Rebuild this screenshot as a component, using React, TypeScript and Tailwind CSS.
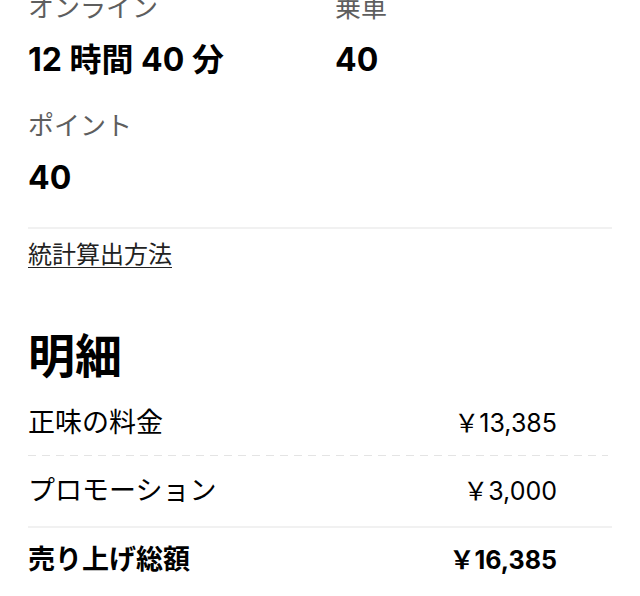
import React from 'react';

const font = { fontFamily: 'Inter, "Noto Sans CJK JP", sans-serif' };

interface Stat {
  label: string;
  value: string;
}

const stats: Stat[] = [
  { label: 'オンライン', value: '12 時間 40 分' },
  { label: '乗車', value: '40' },
  { label: 'ポイント', value: '40' },
];

const rows = [
  { label: '正味の料金', value: '￥13,385', divider: 'dashed' },
  { label: 'プロモーション', value: '￥3,000', divider: 'solid' },
  { label: '売り上げ総額', value: '￥16,385', bold: true },
];

export default function App() {
  return (
    <div className="w-[640px] h-[596px] overflow-hidden bg-white" style={font}>
      <div className="px-[28px] mt-[-10px]">
        {/* Stats grid */}
        <div className="grid grid-cols-[307px_1fr] gap-y-[28px]">
          {stats.map((s) => (
            <div key={s.label} className="flex flex-col gap-[14px]">
              <span className="text-[26px] leading-[36px] text-[#5e5e5e]">{s.label}</span>
              <span className="text-[32px] leading-[40px] font-bold text-black">{s.value}</span>
            </div>
          ))}
        </div>

        <div className="mt-[29px] h-[2px] bg-[#f1f1f1]" />

        <div className="mt-[10px] leading-[32px]">
          <a className="text-[24px] text-[#222] underline underline-offset-[4px] decoration-[1px]">
            統計算出方法
          </a>
        </div>

        {/* Breakdown */}
        <h2 className="mt-[55px] text-[47px] leading-[56px] font-bold text-black">明細</h2>

        <div className="mt-[21px]">
          {rows.map((r) => (
            <div key={r.label}>
              <div
                className={`flex items-center justify-between pr-[55px] h-[36px] leading-[36px] text-black ${
                  r.bold ? 'font-bold' : 'font-normal'
                }`}
              >
                <span className="text-[27px]">{r.label}</span>
                <span className="text-[25px]">{r.value}</span>
              </div>
              {r.divider === 'dashed' && (
                <div className="mt-[14px] mb-[17px] h-[1px] bg-[linear-gradient(to_right,#e4e4e4_8px,transparent_8px)] bg-[length:14px_1px] mr-[4px]" />
              )}
              {r.divider === 'solid' && <div className="mt-[17px] mb-[14px] h-[2px] bg-[#f1f1f1]" />}
            </div>
          ))}
        </div>
      </div>
    </div>
  );
}
